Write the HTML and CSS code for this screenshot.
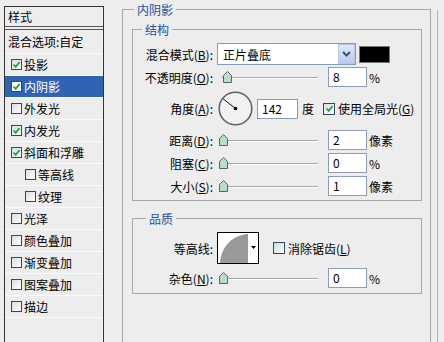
FILE: index.html
```html
<!DOCTYPE html>
<html lang="zh-CN">
<head>
<meta charset="utf-8">
<title>图层样式 - 内阴影</title>
<link rel="stylesheet" href="styles.css">
</head>
<body>
<div class="dialog">
  <aside class="styles-panel">
    <div class="panel-head">样式</div>
    <ul class="style-list">
      <li class="blend">混合选项:自定</li>
      <li><span class="cb"><svg viewBox="0 0 9 9"><polyline points="1.5,4.5 3.7,6.8 7.6,2"/></svg></span>投影</li>
      <li class="selected"><span class="cb"><svg viewBox="0 0 9 9"><polyline points="1.5,4.5 3.7,6.8 7.6,2"/></svg></span>内阴影</li>
      <li><span class="cb"></span>外发光</li>
      <li><span class="cb"><svg viewBox="0 0 9 9"><polyline points="1.5,4.5 3.7,6.8 7.6,2"/></svg></span>内发光</li>
      <li><span class="cb"><svg viewBox="0 0 9 9"><polyline points="1.5,4.5 3.7,6.8 7.6,2"/></svg></span>斜面和浮雕</li>
      <li class="sub"><span class="cb"></span>等高线</li>
      <li class="sub"><span class="cb"></span>纹理</li>
      <li><span class="cb"></span>光泽</li>
      <li><span class="cb"></span>颜色叠加</li>
      <li><span class="cb"></span>渐变叠加</li>
      <li><span class="cb"></span>图案叠加</li>
      <li><span class="cb"></span>描边</li>
    </ul>
  </aside>

  <main class="content">
    <fieldset class="group outer">
      <legend>内阴影</legend>

      <fieldset class="group struct">
        <legend>结构</legend>

        <div class="row r-blend">
          <label class="lbl">混合模式(<u>B</u>):</label>
          <div class="select">
            <span class="select-text">正片叠底</span>
            <span class="select-btn"><svg width="9" height="6" viewBox="0 0 9 6"><polyline points="1,1 4.5,4.5 8,1"/></svg></span>
          </div>
          <span class="swatch"></span>
        </div>

        <div class="row r-slider gap4">
          <label class="lbl">不透明度(<u>O</u>):</label>
          <div class="slider"><span class="track"></span><svg class="thumb" style="left:6px" width="9" height="12" viewBox="0 0 9 12"><polygon points="0.5,4.5 4.5,0.5 8.5,4.5 8.5,11.5 0.5,11.5"/></svg></div>
          <span class="num">8</span>
          <span class="unit">%</span>
        </div>

        <div class="row r-angle">
          <label class="lbl">角度(<u>A</u>):</label>
          <svg class="dial" width="35" height="35" viewBox="0 0 35 35">
            <circle cx="17.5" cy="17.5" r="16.3" fill="#f2f2f2" stroke="#5f6270" stroke-width="1.6"/>
            <line x1="17.5" y1="17.5" x2="5.2" y2="7.9" stroke="#111" stroke-width="1"/>
            <circle cx="17.5" cy="17.5" r="1.8" fill="#000"/>
          </svg>
          <span class="num angle-num">142</span>
          <span class="unit deg">度</span>
          <span class="cb cb-global"><svg viewBox="0 0 9 9"><polyline points="1.5,4.5 3.7,6.8 7.6,2"/></svg></span>
          <span class="cb-text">使用全局光(<u>G</u>)</span>
        </div>

        <div class="row r-slider">
          <label class="lbl">距离(<u>D</u>):</label>
          <div class="slider"><span class="track"></span><svg class="thumb" style="left:2px" width="9" height="12" viewBox="0 0 9 12"><polygon points="0.5,4.5 4.5,0.5 8.5,4.5 8.5,11.5 0.5,11.5"/></svg></div>
          <span class="num">2</span>
          <span class="unit">像素</span>
        </div>

        <div class="row r-slider">
          <label class="lbl">阻塞(<u>C</u>):</label>
          <div class="slider"><span class="track"></span><svg class="thumb" style="left:2px" width="9" height="12" viewBox="0 0 9 12"><polygon points="0.5,4.5 4.5,0.5 8.5,4.5 8.5,11.5 0.5,11.5"/></svg></div>
          <span class="num">0</span>
          <span class="unit">%</span>
        </div>

        <div class="row r-slider last">
          <label class="lbl">大小(<u>S</u>):</label>
          <div class="slider"><span class="track"></span><svg class="thumb" style="left:2px" width="9" height="12" viewBox="0 0 9 12"><polygon points="0.5,4.5 4.5,0.5 8.5,4.5 8.5,11.5 0.5,11.5"/></svg></div>
          <span class="num">1</span>
          <span class="unit">像素</span>
        </div>
      </fieldset>

      <fieldset class="group quality">
        <legend>品质</legend>

        <div class="row r-contour">
          <label class="lbl">等高线:</label>
          <div class="contour">
            <svg width="40" height="30" viewBox="0 0 40 30">
              <path d="M2,30 C3,14 14,2 30,1 L30,30 Z" fill="#999"/>
              <polygon points="33,13 38,13 35.5,16" fill="#000"/>
            </svg>
          </div>
          <span class="cb cb-aa"></span>
          <span class="cb-text">消除锯齿(<u>L</u>)</span>
        </div>

        <div class="row r-slider last">
          <label class="lbl">杂色(<u>N</u>):</label>
          <div class="slider"><span class="track"></span><svg class="thumb" style="left:2px" width="9" height="12" viewBox="0 0 9 12"><polygon points="0.5,4.5 4.5,0.5 8.5,4.5 8.5,11.5 0.5,11.5"/></svg></div>
          <span class="num">0</span>
          <span class="unit">%</span>
        </div>
      </fieldset>
    </fieldset>
    <div class="edge"></div>
  </main>
</div>
</body>
</html>
```

FILE: styles.css
```css
* { box-sizing: border-box; }

html, body { margin: 0; padding: 0; }

body {
  width: 444px;
  height: 342px;
  overflow: hidden;
  background: #ededed;
  color: #000;
  font-family: "Noto Sans CJK SC", "Noto Sans", sans-serif;
  font-size: 12px;
  line-height: 15px;
}

.dialog {
  display: flex;
  height: 342px;
}

/* ---------- left style list ---------- */
.styles-panel {
  flex: none;
  width: 100px;
  height: 336px;
  margin: 6px 0 0 4px;
  border: 1px solid #333;
  border-bottom: none;
}

.panel-head {
  height: 20px;
  line-height: 19px;
  padding-left: 3px;
  border-bottom: 1px solid #555;
}

.style-list {
  list-style: none;
  margin: 2px 0 0;
  padding: 0;
  border-top: 1px solid #555;
}

.style-list li {
  display: flex;
  align-items: center;
  height: 22px;
  padding-left: 6px;
  border-bottom: 1px solid #fbfbfb;
  white-space: nowrap;
}

.style-list li.blend {
  height: 24px;
  padding-left: 3px;
}

.style-list li.sub { padding-left: 20px; }

.style-list li.selected {
  background: #3163b3;
  color: #fff;
}

.style-list .cb { margin-right: 2px; }

/* ---------- checkbox ---------- */
.cb {
  flex: none;
  display: inline-flex;
  align-items: center;
  justify-content: center;
  width: 11px;
  height: 11px;
  border: 1px solid #2c4a68;
  background: linear-gradient(135deg, #d8dde6 0%, #f4f6f8 70%, #ffffff 100%);
}

.selected .cb { background: #fff; }

.cb svg {
  width: 9px;
  height: 9px;
  fill: none;
  stroke: #1fa23a;
  stroke-width: 1.8;
}

.cb-global, .cb-aa {
  width: 12px;
  height: 12px;
}

.cb-aa {
  background: linear-gradient(135deg, #c7dbe6 0%, #eef4f7 70%, #fff 100%);
}

/* ---------- group boxes ---------- */
.content {
  flex: 1;
  display: flex;
  min-width: 0;
}

.group {
  margin: 0;
  padding: 0;
  min-width: 0;
  border: 1px solid #a6a6a6;
}

.group > legend {
  padding: 0 3px;
  line-height: 15px;
  color: #2350a0;
}

.outer {
  flex: none;
  width: 309px;
  height: 340px;
  margin: 2px 0 0 18px;
  padding: 0 8px 0 9px;
  border-bottom: none;
}

.outer > legend { margin-left: 2px; }

.struct {
  margin-top: 5px;
  padding: 6px 0 4px;
}

.struct > legend { margin-left: 9px; }

.quality {
  margin-top: 10px;
  padding: 6px 0 5px;
}

.quality > legend { margin-left: 13px; }

.edge {
  flex: none;
  width: 1px;
  margin: 10px 0 0 6px;
  border-left: 1px solid #b0b0b0;
}

/* ---------- rows ---------- */
.row {
  display: flex;
  align-items: center;
  white-space: nowrap;
}

.lbl {
  flex: none;
  width: 80px;
  text-align: right;
}

.r-blend { height: 22px; margin-bottom: 2px; }
.r-slider { height: 20px; margin-bottom: 3px; }
.r-slider.gap4 { margin-bottom: 4px; }
.r-slider.last { margin-bottom: 0; }
.r-angle { height: 35px; margin-bottom: 4px; }
.r-contour { height: 32px; margin-bottom: 4px; }

/* dropdown */
.select {
  flex: none;
  display: flex;
  align-items: center;
  width: 139px;
  height: 22px;
  margin-left: 4px;
  border: 1px solid #7f9db9;
  background: #fff;
}

.select-text {
  flex: 1;
  padding-left: 5px;
}

.select-btn {
  flex: none;
  display: flex;
  align-items: center;
  justify-content: center;
  width: 17px;
  height: 20px;
  border: 1px solid #b8c8e4;
  background: linear-gradient(#dde7f8, #b9cbec);
}

.select-btn svg polyline {
  fill: none;
  stroke: #3d5279;
  stroke-width: 2;
}

.swatch {
  flex: none;
  width: 31px;
  height: 17px;
  margin-left: 3px;
  background: #000;
  border: 1px solid #777;
}

/* slider */
.slider {
  flex: none;
  position: relative;
  width: 101px;
  height: 20px;
  margin-left: 4px;
}

.track {
  position: absolute;
  left: 4px;
  right: 0;
  top: 10px;
  height: 2px;
  border-top: 1px solid #a8a8a8;
  border-bottom: 1px solid #fff;
}

.thumb {
  position: absolute;
  top: 4px;
}

.thumb polygon {
  fill: #b9dccb;
  stroke: #5a6066;
  stroke-width: 1;
}

/* number boxes */
.num {
  flex: none;
  width: 39px;
  height: 20px;
  margin-left: 10px;
  padding-left: 4px;
  line-height: 18px;
  border: 1px solid #8d9db3;
  background: #fff;
}

.unit { margin-left: 2px; }

.dial { flex: none; margin-left: 5px; }

.angle-num {
  width: 41px;
  margin-left: 4px;
}

.deg { margin-left: 4px; }

.cb-global { margin-left: 9px; }

.cb-text { margin-left: 3px; }

/* contour picker */
.contour {
  flex: none;
  width: 42px;
  height: 32px;
  margin-left: 4px;
  border: 1px solid #000;
  background: #fff;
}

.contour svg { display: block; }

.cb-aa { margin-left: 14px; }
```
